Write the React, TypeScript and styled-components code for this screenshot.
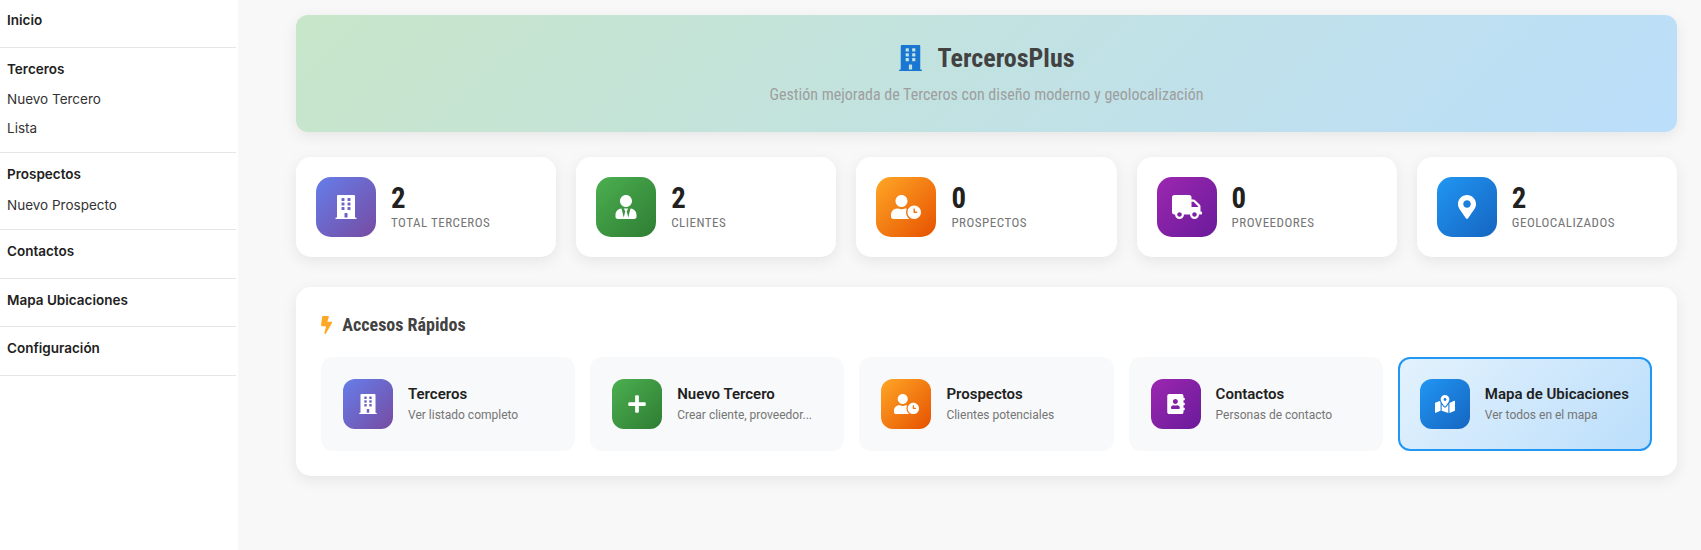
import React from "react";
import styled, { createGlobalStyle } from "styled-components";
import {
  FaAddressBook,
  FaBolt,
  FaBuilding,
  FaMapMarkedAlt,
  FaMapMarkerAlt,
  FaPlus,
  FaTruck,
  FaUserClock,
  FaUserTie,
} from "react-icons/fa";

const gradients = {
  purple: "linear-gradient(135deg, #667eea, #764ba2)",
  green: "linear-gradient(135deg, #4caf50, #2e7d32)",
  orange: "linear-gradient(135deg, #ffa726, #e65100)",
  violet: "linear-gradient(135deg, #9c27b0, #6a1b9a)",
  blue: "linear-gradient(135deg, #2196f3, #1565c0)",
};

type Tone = keyof typeof gradients;

const condensed = `"Roboto Condensed", Roboto, "Liberation Sans", sans-serif`;

const GlobalStyle = createGlobalStyle`
  * {
    box-sizing: border-box;
  }

  html,
  body {
    margin: 0;
    height: 550px;
    overflow: hidden;
    background-color: #f8f8f8;
    font-family: Roboto, "Liberation Sans", sans-serif;
  }
`;

const Page = styled.div`
  display: flex;
  height: 550px;
`;

const Sidebar = styled.nav`
  width: 238px;
  flex-shrink: 0;
  padding-right: 2px;
  background-color: #fff;
  font-family: Inter, "Liberation Sans", sans-serif;
  font-size: 13.5px;
  color: #212121;

  > section:first-child {
    margin-top: -1px;
  }
`;

const MenuSection = styled.section`
  padding: 7px 7px 12.5px;
  border-bottom: 1px solid #e5e5e5;
`;

const MenuTitle = styled.div`
  font-weight: 600;
  line-height: 28px;
`;

const MenuList = styled.div`
  margin: 2.5px 0 -2.5px;
`;

const MenuItem = styled.div`
  line-height: 28.5px;
  color: #333;
`;

const Main = styled.main`
  flex: 1;
  min-width: 0;
  padding: 15px 24px 0 58px;
  display: flex;
  flex-direction: column;
`;

const Banner = styled.header`
  height: 117px;
  border-radius: 12px;
  background: linear-gradient(135deg, #c8e6c9, #bbdefb);
  box-shadow: 0 4px 15px rgba(0, 0, 0, 0.08);
  display: flex;
  flex-direction: column;
  align-items: center;
  padding-top: 28px;
`;

const BannerTitle = styled.h1`
  margin: 0;
  display: flex;
  align-items: center;
  gap: 16px;
  font-family: ${condensed};
  font-stretch: 85%;
  font-size: 26px;
  line-height: 30px;
  font-weight: 700;
  color: #424242;

  svg {
    width: 23px;
    height: 26px;
    color: #1976d2;
  }
`;

const BannerText = styled.p`
  margin: 13px 0 0;
  font-family: ${condensed};
  font-stretch: 85%;
  font-size: 16px;
  line-height: 18px;
  color: #9e9e9e;
`;

const StatsRow = styled.div`
  margin-top: 25px;
  display: grid;
  grid-template-columns: repeat(5, 1fr);
  gap: 20px;
`;

const StatCard = styled.div`
  height: 100px;
  padding: 20px;
  border-radius: 15px;
  background-color: #fff;
  box-shadow: 0 4px 15px rgba(0, 0, 0, 0.08);
  display: flex;
  align-items: center;
  gap: 15px;
`;

const StatText = styled.div`
  margin-top: -2px;
`;

const IconTile = styled.div<{ $tone: Tone; $size: number; $glyphWidth: number; $glyphHeight: number }>`
  width: ${({ $size }) => $size}px;
  height: ${({ $size }) => $size}px;
  flex-shrink: 0;
  border-radius: ${({ $size }) => ($size > 50 ? 15 : 12)}px;
  background: ${({ $tone }) => gradients[$tone]};
  color: #fff;
  display: flex;
  align-items: center;
  justify-content: center;

  svg {
    width: ${({ $glyphWidth }) => $glyphWidth}px;
    height: ${({ $glyphHeight }) => $glyphHeight}px;
  }
`;

const StatValue = styled.div`
  font-family: ${condensed};
  font-stretch: 85%;
  font-size: 28.8px;
  line-height: 32px;
  font-weight: 700;
  color: #212121;
`;

const StatLabel = styled.div`
  margin-top: 1px;
  font-family: ${condensed};
  font-stretch: 85%;
  font-size: 13px;
  line-height: 16px;
  letter-spacing: 0.5px;
  text-transform: uppercase;
  color: #757575;
`;

const QuickCard = styled.section`
  margin-top: 30px;
  height: 189px;
  padding: 25px;
  border-radius: 15px;
  background-color: #fff;
  box-shadow: 0 4px 15px rgba(0, 0, 0, 0.08);
`;

const QuickHeading = styled.h2`
  margin: 1px 0 0;
  display: flex;
  align-items: center;
  gap: 10px;
  font-family: ${condensed};
  font-stretch: 85%;
  font-size: 18px;
  line-height: 24px;
  font-weight: 700;
  color: #424242;

  svg {
    width: 11.25px;
    height: 18px;
    color: #ffa726;
  }
`;

const QuickGrid = styled.div`
  margin-top: 20px;
  display: grid;
  grid-template-columns: repeat(5, 1fr);
  gap: 15px;
`;

const QuickItem = styled.a<{ $active?: boolean }>`
  height: 94px;
  padding: 20px;
  border-radius: 12px;
  border: 2px solid ${({ $active }) => ($active ? "#2196f3" : "transparent")};
  background: ${({ $active }) =>
    $active ? "linear-gradient(135deg, #e3f2fd, #bbdefb)" : "#f8f9fa"};
  display: flex;
  align-items: center;
  gap: 15px;
`;

const QuickName = styled.div`
  font-size: 15px;
  line-height: 18px;
  font-weight: 600;
  color: #212121;
`;

const QuickHint = styled.div`
  margin-top: 5px;
  font-size: 12px;
  line-height: 15px;
  color: #757575;
`;

const menu = [
  { title: "Inicio", items: [] },
  { title: "Terceros", items: ["Nuevo Tercero", "Lista"] },
  { title: "Prospectos", items: ["Nuevo Prospecto"] },
  { title: "Contactos", items: [] },
  { title: "Mapa Ubicaciones", items: [] },
  { title: "Configuración", items: [] },
];

const stats: { value: number; label: string; tone: Tone; icon: React.ReactNode; glyphWidth: number }[] = [
  { value: 2, label: "Total Terceros", tone: "purple", icon: <FaBuilding />, glyphWidth: 24 },
  { value: 2, label: "Clientes", tone: "green", icon: <FaUserTie />, glyphWidth: 24 },
  { value: 0, label: "Prospectos", tone: "orange", icon: <FaUserClock />, glyphWidth: 30 },
  { value: 0, label: "Proveedores", tone: "violet", icon: <FaTruck />, glyphWidth: 30 },
  { value: 2, label: "Geolocalizados", tone: "blue", icon: <FaMapMarkerAlt />, glyphWidth: 24 },
];

const shortcuts: {
  name: string;
  hint: string;
  tone: Tone;
  icon: React.ReactNode;
  glyphWidth: number;
  glyphHeight: number;
  active?: boolean;
}[] = [
  { name: "Terceros", hint: "Ver listado completo", tone: "purple", icon: <FaBuilding />, glyphWidth: 20, glyphHeight: 20 },
  { name: "Nuevo Tercero", hint: "Crear cliente, proveedor...", tone: "green", icon: <FaPlus />, glyphWidth: 20, glyphHeight: 20 },
  { name: "Prospectos", hint: "Clientes potenciales", tone: "orange", icon: <FaUserClock />, glyphWidth: 25, glyphHeight: 20 },
  { name: "Contactos", hint: "Personas de contacto", tone: "violet", icon: <FaAddressBook />, glyphWidth: 20, glyphHeight: 20 },
  { name: "Mapa de Ubicaciones", hint: "Ver todos en el mapa", tone: "blue", icon: <FaMapMarkedAlt />, glyphWidth: 20, glyphHeight: 18, active: true },
];

export default function App() {
  return (
    <Page>
      <GlobalStyle />
      <Sidebar>
        {menu.map((section) => (
          <MenuSection key={section.title}>
            <MenuTitle>{section.title}</MenuTitle>
            {section.items.length > 0 && (
              <MenuList>
                {section.items.map((item) => (
                  <MenuItem key={item}>{item}</MenuItem>
                ))}
              </MenuList>
            )}
          </MenuSection>
        ))}
      </Sidebar>
      <Main>
        <Banner>
          <BannerTitle>
            <FaBuilding />
            TercerosPlus
          </BannerTitle>
          <BannerText>Gestión mejorada de Terceros con diseño moderno y geolocalización</BannerText>
        </Banner>
        <StatsRow>
          {stats.map((stat) => (
            <StatCard key={stat.label}>
              <IconTile $tone={stat.tone} $size={60} $glyphWidth={stat.glyphWidth} $glyphHeight={24}>
                {stat.icon}
              </IconTile>
              <StatText>
                <StatValue>{stat.value}</StatValue>
                <StatLabel>{stat.label}</StatLabel>
              </StatText>
            </StatCard>
          ))}
        </StatsRow>
        <QuickCard>
          <QuickHeading>
            <FaBolt />
            Accesos Rápidos
          </QuickHeading>
          <QuickGrid>
            {shortcuts.map((item) => (
              <QuickItem key={item.name} $active={item.active}>
                <IconTile $tone={item.tone} $size={50} $glyphWidth={item.glyphWidth} $glyphHeight={item.glyphHeight}>
                  {item.icon}
                </IconTile>
                <div>
                  <QuickName>{item.name}</QuickName>
                  <QuickHint>{item.hint}</QuickHint>
                </div>
              </QuickItem>
            ))}
          </QuickGrid>
        </QuickCard>
      </Main>
    </Page>
  );
}
